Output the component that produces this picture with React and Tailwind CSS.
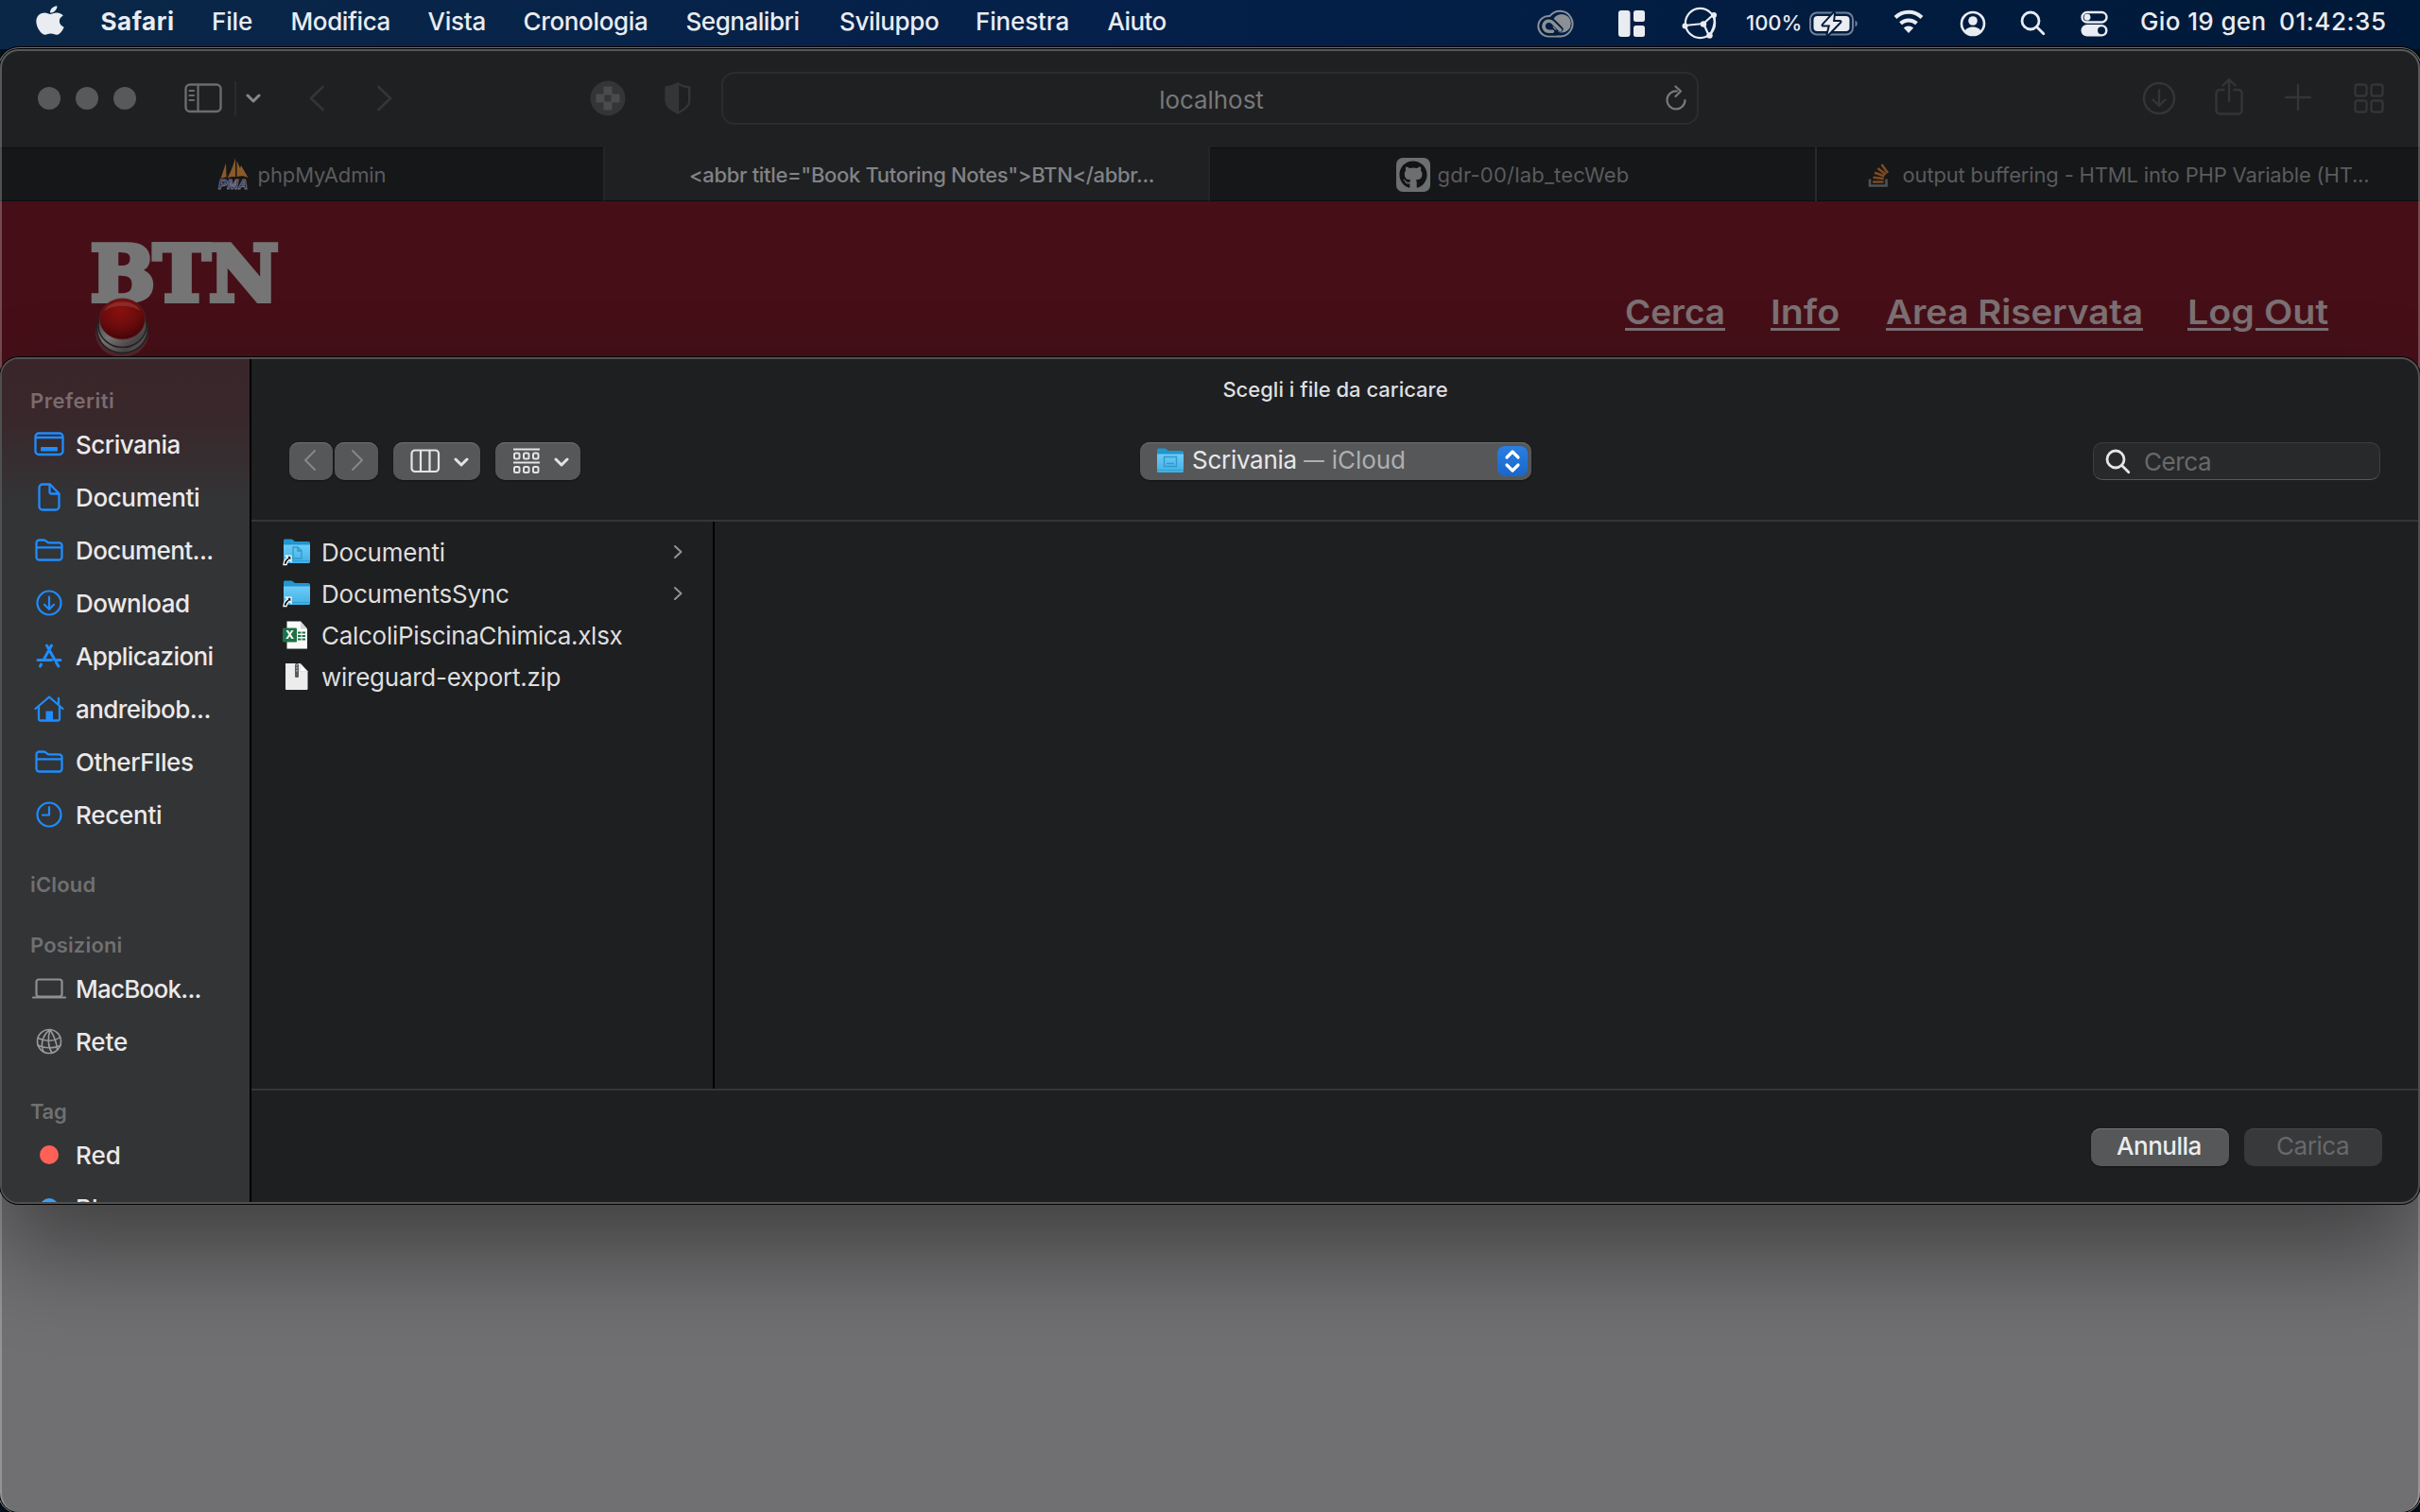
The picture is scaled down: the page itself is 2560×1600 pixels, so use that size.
import React from "react";
import { FaApple, FaGithub } from "react-icons/fa";

/* ---------- generic drawing helpers ---------- */

function Icon({ w, h, vb, className = "", children, sw = 2 }) {
  return (
    <svg
      width={w}
      height={h}
      viewBox={vb || `0 0 ${w} ${h}`}
      fill="none"
      stroke="currentColor"
      strokeWidth={sw}
      strokeLinecap="round"
      strokeLinejoin="round"
      className={"block shrink-0 " + className}
    >
      {children}
    </svg>
  );
}

const Chevron = ({ className }) => (
  <Icon w={16} h={10} sw={3} className={className}>
    <path d="M2 2l6 6 6-6" />
  </Icon>
);

/* ---------- menu bar ---------- */

const MENUS = [
  ["File", "w-[83.5px] tracking-[-0.14px]"],
  ["Modifica", "w-[145px] tracking-[-0.4px]"],
  ["Vista", "w-[101px] tracking-[-0.24px]"],
  ["Cronologia", "w-[172px] tracking-[-0.34px]"],
  ["Segnalibri", "w-[162.5px] tracking-[-0.46px]"],
  ["Sviluppo", "w-[144px] tracking-[-0.38px]"],
  ["Finestra", "w-[139.5px] tracking-[-0.15px]"],
  ["Aiuto", "w-[70px] tracking-[-0.58px]"],
];

function MenuBar() {
  return (
    <div className="flex h-[52px] shrink-0 items-start bg-linear-to-r from-[#0a2747] via-[#05204a] via-45% to-[#001938] text-[26px] font-medium leading-[45px] text-[#e9ecf1]">
      <div className="ml-[38px] flex h-[43px] w-[68.5px] items-center">
        <FaApple className="block h-[35px] w-[30px]" preserveAspectRatio="none" />
      </div>
      <div className="w-[117.5px] font-bold tracking-[0.55px]">Safari</div>
      {MENUS.map(([t, c]) => (
        <div key={t} className={c}>
          {t}
        </div>
      ))}
      <div className="ml-auto flex h-[49px] items-center">
        <Icon w={40} h={30} className="text-[#8b9097]" sw={2}>
          <path d="M12.500 28.500A10.800 10.800 0 1 1 13.500 7A13.400 13.400 0 1 1 25.500 28.500Z" />
          <circle cx="26" cy="14.800" r="9.800" fill="currentColor" stroke="none" />
          <path d="M19.500 24.500h-7a6.500 6.500 0 1 1 4.600-11.100l7.400 7.400" stroke="#021c3b" strokeWidth="6" />
          <path d="M16.500 23.200h-4a5.500 5.500 0 1 1 3.900-9.400l8.100 8" strokeWidth="3.600" />
        </Icon>
        <Icon w={28} h={28} className="ml-[46px]">
          <g fill="currentColor" stroke="none">
            <rect width="12.500" height="28" rx="3" />
            <rect x="16" width="12" height="12" rx="2.500" />
            <rect x="16" y="16" width="12" height="12" rx="2.500" />
          </g>
        </Icon>
        <Icon w={38} h={36} className="ml-[39px]" sw={2.2}>
          <circle cx="19.500" cy="17.500" r="15.600" />
          <path d="M3 20l20-2 11-10M23 18l6 13M34 8c2 8 0 16-5 23" />
          <g fill="currentColor" stroke="none">
            <circle cx="3.500" cy="20.500" r="3" />
            <circle cx="23" cy="18.500" r="3.200" />
            <circle cx="34" cy="9" r="3" />
            <circle cx="29.500" cy="30.500" r="3.200" />
          </g>
        </Icon>
        <div className="ml-[30px] w-[67px] text-[22px]">100%</div>
        <Icon w={52} h={28} sw={2}>
          <rect x="1" y="2.500" width="45" height="23" rx="7" stroke="#6f8097" />
          <path d="M48.500 10.500v7c3-1.500 3-5.500 0-7z" fill="#6f8097" stroke="none" />
          <rect x="4.500" y="6" width="38" height="16" rx="4" fill="currentColor" stroke="none" />
          <path d="M26 3L14.500 15.500h7.500L19.500 25.500 32.500 12h-7.500z" fill="currentColor" stroke="#021c3b" strokeWidth="4" />
          <path d="M26 3L14.500 15.500h7.500L19.500 25.500 32.500 12h-7.500z" fill="currentColor" stroke="none" />
        </Icon>
        <Icon w={34} h={26} className="ml-[36px] mb-[3px]" sw={4}>
          <path d="M3 8.500a20 20 0 0 1 28 0" strokeLinecap="butt" />
          <path d="M8.500 14.800a12.500 12.500 0 0 1 17 0" strokeLinecap="butt" />
          <path d="M17 25l-5.200-5.500a7.600 7.600 0 0 1 10.400 0z" fill="currentColor" stroke="none" />
        </Icon>
        <Icon w={28} h={28} className="ml-[37px]" sw={2.6}>
          <circle cx="14" cy="14" r="12" />
          <circle cx="14" cy="11" r="4.800" fill="currentColor" stroke="none" />
          <path d="M5.500 22c2-6 15-6 17 0-4 5-13 5-17 0z" fill="currentColor" stroke="none" />
        </Icon>
        <Icon w={27} h={27} className="ml-[36px]" sw={2.8}>
          <circle cx="11" cy="11" r="9" />
          <path d="M17.800 17.800l7 7" />
        </Icon>
        <Icon w={30} h={28} className="ml-[37px]" sw={2.4}>
          <rect x="1.500" y="2" width="26" height="10.500" rx="5.250" />
          <circle cx="7" cy="7.250" r="3.400" fill="currentColor" stroke="none" />
          <rect x="0.500" y="15" width="28" height="12.500" rx="6.250" fill="currentColor" stroke="none" />
          <circle cx="22" cy="21.250" r="4" fill="#021c3b" stroke="none" />
        </Icon>
      </div>
      <div className="ml-[33px] w-[147px] whitespace-pre tracking-[0.38px]">Gio 19 gen</div>
      <div className="w-[149px] tracking-[0.61px]">01:42:35</div>
    </div>
  );
}

/* ---------- browser window ---------- */

function BrowserToolbar() {
  return (
    <div className="flex h-[104px] shrink-0 items-center bg-[#1f2022] text-[#343537]">
      <div className="ml-[40px] flex gap-[16px]">
        <div className="size-[24px] rounded-full bg-[#58595b]" />
        <div className="size-[24px] rounded-full bg-[#58595b]" />
        <div className="size-[24px] rounded-full bg-[#58595b]" />
      </div>
      <Icon w={40} h={32} className="ml-[51px] text-[#6b6c6e]" sw={2.4}>
        <rect x="1.500" y="1.500" width="37" height="28.500" rx="4.500" />
        <path d="M14.500 2v28M5.500 8h4.500M5.500 13h4.500M5.500 18h4.500" strokeWidth="2.200" />
      </Icon>
      <div className="ml-[13px] h-[36px] w-[2px] bg-[#2a2b2d]" />
      <Chevron className="ml-[10px] text-[#87888a]" />
      <Icon w={18} h={28} className="ml-[50px]" sw={2.6}>
        <path d="M15.500 2L3 14l12.500 12" />
      </Icon>
      <Icon w={18} h={28} className="ml-[54px]" sw={2.6}>
        <path d="M2.500 2L15 14 2.500 26" />
      </Icon>
      <Icon w={38} h={38} className="ml-[208px]">
        <circle cx="19" cy="19" r="18.500" fill="#343536" stroke="none" />
        <path d="M14.500 6.500h9v8h8v9h-8v8h-9v-8h-8v-9h8z" fill="#4a4b4d" stroke="none" />
        <rect x="15.500" y="15.500" width="7" height="7" fill="#343536" stroke="none" />
      </Icon>
      <Icon w={28} h={34} className="ml-[41px]" sw={2.4}>
        <path d="M14 1.500C10 4 6 5 1.800 5.500V20c0 6 7 10 12.200 12.500C19.200 30 26.200 26 26.200 20V5.500C22 5 18 4 14 1.500z" />
        <path d="M14 1.500C10 4 6 5 1.800 5.500V20c0 6 7 10 12.200 12.500z" fill="currentColor" />
      </Icon>
      <div className="ml-[32px] flex h-[56px] w-[1034px] items-center rounded-[14px] border-2 border-[#2b2c2e] text-[26px] leading-none text-[#77787a]">
        <div className="flex-1 pl-[37px] pt-[3px] text-center tracking-[-0.07px]">localhost</div>
        <Icon w={24} h={28} className="mr-[10px] text-[#77787a]" sw={2.2}>
          <path d="M13 6.500a9.500 9.500 0 1 0 8.500 9.500" />
          <path d="M11.500 1.500l5.500 5-5.500 5.500" />
        </Icon>
      </div>
      <Icon w={36} h={36} className="ml-[469px]" sw={2.4}>
        <circle cx="18" cy="18" r="16" />
        <path d="M18 9.500v16M11.500 19.500l6.500 6.500 6.500-6.500" />
      </Icon>
      <Icon w={30} h={40} className="mb-[5px] ml-[41px]" sw={2.4}>
        <path d="M9.500 13H5a3.500 3.500 0 0 0-3.500 3.500V35A3.500 3.500 0 0 0 5 38.500h20a3.500 3.500 0 0 0 3.500-3.500V16.500A3.500 3.500 0 0 0 25 13h-4.500M15 25V2M8.500 8.500L15 2l6.500 6.500" />
      </Icon>
      <Icon w={28} h={28} className="mb-[3px] ml-[44px]" sw={2.4}>
        <path d="M14 1v26M1 14h26" />
      </Icon>
      <Icon w={32} h={32} className="ml-[45px]" sw={2.4}>
        <rect x="1.500" y="1.500" width="12" height="12" rx="2.500" />
        <rect x="18.500" y="1.500" width="12" height="12" rx="2.500" />
        <rect x="1.500" y="18.500" width="12" height="12" rx="2.500" />
        <rect x="18.500" y="18.500" width="12" height="12" rx="2.500" />
      </Icon>
    </div>
  );
}

function TabBar() {
  const tab = "flex items-center justify-center whitespace-pre ";
  return (
    <div className="flex h-[57px] shrink-0 text-[22px] text-[#5a5b5d]">
      <div className={tab + "w-[638px] border-y border-[#0c0d0e] bg-[#161719]"}>
        <Icon w={34} h={36} className="mr-[9px]">
          <g fill="#8a5a28" stroke="none">
            <path d="M9 5.500L3.500 22c2.500-1 4-1.500 6-1.500z" />
            <path d="M19 0c-2 8-5 15-8.500 21.500 3-1.500 5.500-1.800 8.500-1.500z" />
            <path d="M20.500 3l3.500 8 1-3 7.500 13c-4-2-8-2-12-1z" />
          </g>
          <text x="1" y="33" textLength="31" lengthAdjust="spacingAndGlyphs" fill="#17182c" stroke="#74748c" strokeWidth="1" fontFamily="Liberation Sans" fontStyle="italic" fontWeight="700" fontSize="14">
            PMA
          </text>
        </Icon>
        <span className="pt-px tracking-[-0.12px]">phpMyAdmin</span>
      </div>
      <div className={tab + "w-[642px] border-x-2 border-b border-x-[#242527] border-b-[#0c0d0e] bg-[#1f2022] pl-[32px] pt-[2px] font-medium tracking-[-0.33px] text-[#828385]"}>
        {'<abbr title="Book Tutoring Notes">BTN</abbr...'}
      </div>
      <div className={tab + "w-[640px] border-y border-[#0c0d0e] bg-[#161719]"}>
        <div className="mr-[8px] flex size-[36px] items-center justify-center rounded-[7px] bg-[#6d6e70]">
          <FaGithub className="size-[30px] text-[#121315]" />
        </div>
        <span className="pt-px tracking-[0.2px]">gdr-00/lab_tecWeb</span>
      </div>
      <div className="w-[2px] bg-[#28292b]" />
      <div className={tab + "w-[638px] border-y border-[#0c0d0e] bg-[#161719]"}>
        <Icon w={24} h={26} className="mr-[13px]" sw={2.6}>
          <path d="M2 17.500v7h17.500v-7" stroke="#505355" strokeLinecap="butt" strokeLinejoin="miter" />
          <path d="M5 20.500h11.500M5.500 15.800l11.300 1.200M7 10.800l10.500 3.500M10.300 6l8.700 6.500M14.500 2l6.500 9" stroke="#7d4a20" strokeLinecap="butt" />
        </Icon>
        <span className="pt-px tracking-[-0.17px]">output buffering - HTML into PHP Variable (HT...</span>
      </div>
    </div>
  );
}

function SiteLogo() {
  return (
    <div className="relative ml-[96px] mt-[39px] h-[76px] w-[220px]">
      <div className="font-['DejaVu_Serif'] text-[80px] font-bold leading-[76px] tracking-[-1px] text-[#757575] [-webkit-text-stroke:6px_#757575]">
        BTN
      </div>
      <svg width="60" height="66" viewBox="0 0 60 66" className="absolute left-[4px] top-[63px]">
        <defs>
          <radialGradient id="cap" cx=".45" cy=".3" r=".7">
            <stop offset="0" stopColor="#8a1210" />
            <stop offset=".6" stopColor="#6c0c0e" />
            <stop offset="1" stopColor="#450608" />
          </radialGradient>
          <linearGradient id="ring" x1="0" y1="0" x2="1" y2="1">
            <stop offset="0" stopColor="#2a2526" />
            <stop offset=".45" stopColor="#7b7778" />
            <stop offset=".75" stopColor="#4b4748" />
            <stop offset="1" stopColor="#6c6869" />
          </linearGradient>
        </defs>
        <ellipse cx="29" cy="38" rx="28" ry="25" fill="#5c3c3f" opacity=".55" />
        <ellipse cx="29.500" cy="33" rx="27" ry="25.500" fill="url(#ring)" stroke="#222" strokeWidth="1.500" />
        <ellipse cx="29.500" cy="29" rx="25.500" ry="23.500" fill="none" stroke="#252223" strokeWidth="1.500" />
        <ellipse cx="29.500" cy="22.500" rx="24" ry="21.500" fill="url(#cap)" stroke="#5a2023" strokeWidth="1" />
        <path d="M10 14C17 1 42 1 49 14 38 7 20 7 10 14z" fill="#a05048" opacity=".45" />
      </svg>
    </div>
  );
}

function BrowserWindow() {
  const link = "inline-block origin-left underline decoration-[3px] underline-offset-[4px] ";
  return (
    <div className="relative flex h-[1548px] w-full flex-col overflow-hidden rounded-[20px] bg-[#707072]">
      <BrowserToolbar />
      <TabBar />
      <div className="flex h-[240px] shrink-0 justify-between bg-[#460f18]">
        <SiteLogo />
        <nav className="mt-[95px] flex text-[36px] font-semibold leading-[44px] text-[#7b7073]">
          <div className="w-[154px]"><a className={link + "scale-x-[1.026]"}>Cerca</a></div>
          <div className="w-[122px]"><a className={link + "scale-x-[1.09]"}>Info</a></div>
          <div className="w-[319px]"><a className={link + "scale-x-[1.067]"}>Area Riservata</a></div>
          <div className="w-[246px]"><a className={link + "scale-x-[1.095]"}>Log Out</a></div>
        </nav>
      </div>
      <div className="pointer-events-none absolute inset-0 rounded-[20px] border-2 border-b-0 border-white/25" />
    </div>
  );
}

/* ---------- file chooser sheet ---------- */

const FolderLine = () => (
  <Icon w={30} h={24} sw={2.3}>
    <path d="M1.500 19.500v-15A3 3 0 0 1 4.500 1.500h4.800c1.200 0 1.800.4 2.600 1.200l1 .8c.8.6 1.200.8 2.400.8h10.200a3 3 0 0 1 3 3v12.200a3 3 0 0 1-3 3h-21a3 3 0 0 1-3-3zM1.500 9.300h27" />
  </Icon>
);

const SIDE_ICONS = {
  desktop: (
    <Icon w={32} h={26} sw={2.3}>
      <rect x="1.500" y="1.500" width="29" height="22.500" rx="3.500" />
      <path d="M2 6h28" />
      <rect x="7" y="16" width="18" height="4.500" rx="1" fill="currentColor" stroke="none" />
    </Icon>
  ),
  doc: (
    <Icon w={24} h={30} sw={2.3}>
      <path d="M13 1.500H5A3.500 3.500 0 0 0 1.500 5v20A3.500 3.500 0 0 0 5 28.500h14a3.500 3.500 0 0 0 3.500-3.500V11.500zM12.500 2v7.500a2 2 0 0 0 2 2h7.500" />
    </Icon>
  ),
  folder: <FolderLine />,
  download: (
    <Icon w={28} h={28} sw={2.2}>
      <circle cx="14" cy="14" r="12.500" />
      <path d="M14 7.500v13M9 15.800l5 5 5-5" />
    </Icon>
  ),
  apps: (
    <Icon w={28} h={26} sw={3}>
      <path d="M11.500 2L20 17.500M16.500 2L8 17.500M2 17.500h14.500M21.500 17.500H26M5.500 22l-1 2M21.500 20l2.300 4" />
    </Icon>
  ),
  home: (
    <Icon w={32} h={28} sw={2.3}>
      <path d="M1.500 14L16 1.500 30.500 14M5 12v12.500a2 2 0 0 0 2 2h18a2 2 0 0 0 2-2V12M26 3v6" />
      <rect x="12.500" y="16.500" width="7.500" height="10" fill="currentColor" stroke="none" />
    </Icon>
  ),
  clock: (
    <Icon w={28} h={28} sw={2.2}>
      <circle cx="14" cy="14" r="12.500" />
      <path d="M14 6v8.500H7" />
    </Icon>
  ),
  laptop: (
    <Icon w={36} h={22} sw={2.2} className="text-[#8f9092]">
      <rect x="4.500" y="1.500" width="27" height="18" rx="2.500" />
      <path d="M1 20.500h34" />
    </Icon>
  ),
  globe: (
    <Icon w={28} h={28} sw={1.6} className="text-[#98999b]">
      <circle cx="14" cy="14" r="12.500" />
      <path d="M15 1.500C6 8 5 18 8 24.800M15 1.500c-3 9-2 19 2 24.500M15 1.500c3 5 7 12 7.500 21M2 10.500c8 4 18 3.500 23.500-1M2 18c6 3.500 18 3.500 24 .500" />
    </Icon>
  ),
  red: <div className="size-[20px] rounded-full bg-[#ff6159]" />,
  blue: <div className="size-[20px] rounded-full bg-[#3a9ff8]" />,
};

const GROUPS = [
  {
    title: "Preferiti",
    head: "mt-[28px] mb-[2px] tracking-[0.51px] text-[#7a6b6e]",
    items: [
      ["desktop", "Scrivania", "tracking-[-0.5px]"],
      ["doc", "Documenti", "tracking-[-0.37px]"],
      ["folder", "Document...", "tracking-[-0.55px]"],
      ["download", "Download", "tracking-[-0.5px]"],
      ["apps", "Applicazioni", "tracking-[-0.6px]"],
      ["home", "andreibob...", "tracking-[-0.55px]"],
      ["folder", "OtherFIles", "tracking-[-0.38px]"],
      ["clock", "Recenti", "tracking-[-0.26px]"],
    ],
  },
  { title: "iCloud", head: "mt-[30px] tracking-[0.18px] text-[#6f7072]", items: [] },
  {
    title: "Posizioni",
    head: "mt-[32px] mb-[2px] tracking-[0.15px] text-[#6f7072]",
    items: [
      ["laptop", "MacBook...", "tracking-[-0.75px]"],
      ["globe", "Rete", "tracking-[-0.12px]"],
    ],
  },
  {
    title: "Tag",
    head: "mt-[30px] mb-[2px] tracking-[-0.3px] text-[#6f7072]",
    items: [
      ["red", "Red", ""],
      ["blue", "Blue", ""],
    ],
  },
];

function Sidebar() {
  return (
    <aside className="flex h-full w-[264px] shrink-0 flex-col overflow-hidden border-r-2 border-black bg-[#333436] bg-linear-to-b from-[#3a262a] from-0% via-[#38272b] via-7% to-[#333436] to-17%">
      {GROUPS.map((g) => (
        <React.Fragment key={g.title}>
          <div className={"ml-[30px] h-[32px] shrink-0 text-[22px] font-semibold leading-[32px] " + g.head}>{g.title}</div>
          {g.items.map(([icon, label, c]) => (
            <div key={label} className="flex h-[56px] shrink-0 items-center text-[#1f8cff]">
              <div className="ml-[30px] flex w-[40px] justify-center">{SIDE_ICONS[icon]}</div>
              <div className={"ml-[8px] text-[26px] font-medium text-[#ebe9ea] " + c}>{label}</div>
            </div>
          ))}
        </React.Fragment>
      ))}
    </aside>
  );
}

function BlueFolder({ alias, glyph }) {
  return (
    <svg width="30" height="30" viewBox="0 0 30 30" className="block shrink-0">
      <defs>
        <linearGradient id="folderFront" x1="0" y1="0" x2="0" y2="1">
          <stop offset="0" stopColor="#6fcbf6" />
          <stop offset="1" stopColor="#3fb0e6" />
        </linearGradient>
      </defs>
      <path d="M1 3.500C1 2 1.500 1.500 3 1.500h6.500c1.500 0 2 2.500 4 2.500H27c1.300 0 2 .7 2 2V12H1z" fill="#2196cf" />
      <path d="M1 7.500h28V25c0 1.500-.5 2-2 2H3c-1.500 0-2-.5-2-2z" fill="url(#folderFront)" />
      <path d="M1 24.500h28" stroke="#2f9fd6" strokeWidth="1" />
      {glyph === "doc" && <path d="M11 10h5l4 4v8h-9zM16 10v4h4" fill="none" stroke="#3199cb" strokeWidth="1.300" />}
      {glyph === "desktop" && (
        <path d="M8.500 10.500h13v10h-13zM11 17.500h8" fill="none" stroke="#3199cb" strokeWidth="1.400" />
      )}
      {alias && (
        <path d="M1 28.500c0-4 2-6 4.500-7.500l-2-1.800h5.500v6l-2-2c-2 1.300-2.500 3-3 5.300z" fill="#111" stroke="#fff" strokeWidth="1.300" />
      )}
    </svg>
  );
}

const ExcelFile = () => (
  <svg width="30" height="30" viewBox="0 0 30 30" className="block shrink-0">
    <path d="M4.500.5H19l7 8v21H4.500z" fill="#fbfbfb" />
    <path d="M19 .5v8h7z" fill="#d4d4d4" />
    <g fill="#1e7145">
      <rect x="16" y="11.500" width="3.500" height="2" />
      <rect x="20.500" y="11.500" width="3.500" height="2" />
      <rect x="16" y="15" width="3.500" height="2" />
      <rect x="20.500" y="15" width="3.500" height="2" />
      <rect x="16" y="18.500" width="3.500" height="2" />
      <rect x="20.500" y="18.500" width="3.500" height="2" />
      <rect x="0" y="7.500" width="15" height="15" rx="1" />
    </g>
    <text x="7.500" y="19.300" textAnchor="middle" fill="#fff" fontFamily="Inter" fontWeight="700" fontSize="12">
      X
    </text>
  </svg>
);

const ZipFile = () => (
  <svg width="30" height="30" viewBox="0 0 30 30" className="block shrink-0">
    <path d="M3 1H18.500l8 8.500V28a1 1 0 0 1-1 1H4a1 1 0 0 1-1-1z" fill="#ececec" />
    <path d="M18.500 1v8.500h8z" fill="#fff" stroke="#cfcfcf" strokeWidth=".6" />
    <rect x="13" y="1" width="4" height="15" rx="1.500" fill="#5a5b5d" />
    <path d="M15 2v8" stroke="#c9c9c9" strokeWidth="1.200" strokeDasharray="1.500 1.500" />
  </svg>
);

const FILES = [
  [<BlueFolder alias glyph="doc" />, "Documenti", "tracking-[-0.2px]", true],
  [<BlueFolder alias />, "DocumentsSync", "tracking-[-0.21px]", true],
  [<ExcelFile />, "CalcoliPiscinaChimica.xlsx", "tracking-[-0.29px]", false],
  [<ZipFile />, "wireguard-export.zip", "tracking-[-0.25px]", false],
];

function SheetToolbar() {
  const button = "flex h-[40px] items-center rounded-[10px] bg-[#565759] shadow-[inset_0_1px_0_#6f7072,0_1px_2px_#00000066] ";
  return (
    <div className="h-[172px] shrink-0 border-b-2 border-[#343537]">
      <div className="flex h-[64px] items-center justify-center pl-px text-[22px] font-medium text-[#dfdfe0]">
        Scegli i file da caricare
      </div>
      <div className="mt-[24px] grid grid-cols-[900px_414px_1fr] pl-[40px] pr-[40px]">
        <div className="flex text-[#e4e4e5]">
          <div className={button + "w-[46px] justify-center pb-[2px] pr-[2px]"}>
            <Icon w={14} h={24} sw={2} className="text-[#87888a]">
              <path d="M12 2L2 12l10 10" />
            </Icon>
          </div>
          <div className={button + "ml-[2px] w-[46px] justify-center pb-[2px] pl-px"}>
            <Icon w={14} h={24} sw={2} className="text-[#87888a]">
              <path d="M2 2l10 10L2 22" />
            </Icon>
          </div>
          <div className={button + "ml-[16px] w-[92px] pl-[18px]"}>
            <Icon w={32} h={26} sw={2.2}>
              <rect x="1.500" y="1.500" width="28.500" height="22.500" rx="3.500" />
              <path d="M11 2v22M20.500 2v22" />
            </Icon>
            <Chevron className="ml-[14px] mt-[2px]" />
          </div>
          <div className={button + "ml-[16px] w-[90px] pl-[18px]"}>
            <Icon w={30} h={28} sw={2}>
              <path d="M1 1.500h28M1 15.500h28" strokeLinecap="butt" />
              <rect x="2" y="5.500" width="5.500" height="6" rx="1.500" />
              <rect x="12" y="5.500" width="5.500" height="6" rx="1.500" />
              <rect x="22" y="5.500" width="5.500" height="6" rx="1.500" />
              <rect x="2" y="20" width="5.500" height="6" rx="1.500" />
              <rect x="12" y="20" width="5.500" height="6" rx="1.500" />
              <rect x="22" y="20" width="5.500" height="6" rx="1.500" />
            </Icon>
            <Chevron className="ml-[14px] mt-[2px]" />
          </div>
        </div>
        <div className={button + "pl-[17px] pr-[4px] text-[26px]"}>
          <BlueFolder glyph="desktop" />
          <div className="ml-[8px] whitespace-pre pb-[3px] text-[#aeafb0]">
            <span className="tracking-[-0.28px] text-[#e8e8e9]">Scrivania</span>
            <span className="inline-block w-[37px] text-center"><span className="inline-block scale-x-[0.84]">—</span></span>
            <span className="tracking-[-0.1px]">iCloud</span>
          </div>
          <div className="ml-auto flex h-[32px] w-[32px] flex-col items-center justify-center rounded-[8px] bg-linear-to-b from-[#2a7fe2] to-[#1a66cc] text-white">
            <Icon w={18} h={26} sw={3.2}>
              <path d="M3 9l6-6 6 6M3 17l6 6 6-6" />
            </Icon>
          </div>
        </div>
        <div className="flex h-[40px] w-[304px] items-center justify-self-end rounded-[10px] border border-[#3d3e40] border-b-[#57585a] bg-[#28292b] pl-[12px] text-[26px] text-[#68696b]">
          <Icon w={27} h={27} sw={2.8} className="text-[#e6e6e7]">
            <circle cx="11" cy="11" r="9" />
            <path d="M17.800 17.800l7 7" />
          </Icon>
          <div className="ml-[14px] tracking-[-0.4px]">Cerca</div>
        </div>
      </div>
    </div>
  );
}

function FileSheet() {
  return (
    <div className="absolute left-0 top-[378px] flex h-[896px] w-[2560px] overflow-hidden rounded-[20px] border-2 border-[#4f5052] bg-[#1e1f21] shadow-[0_0_0_1px_#050505,0_50px_100px_rgba(0,0,0,0.42)]">
      <Sidebar />
      <div className="flex flex-1 flex-col">
        <SheetToolbar />
        <div className="flex flex-1">
          <div className="w-[490px] border-r-2 border-black pt-[10px]">
            {FILES.map(([icon, name, c, open]) => (
              <div key={name} className="flex h-[44px] items-center pl-[33px] text-[26px] text-[#dedede]">
                {icon}
                <div className={"ml-[11px] flex-1 " + c}>{name}</div>
                {open && (
                  <Icon w={10} h={16} sw={2} className="mr-[32px] text-[#929395]">
                    <path d="M2 2l6.500 6L2 14" />
                  </Icon>
                )}
              </div>
            ))}
          </div>
        </div>
        <div className="flex h-[120px] shrink-0 justify-end gap-[16px] border-t-2 border-[#343537] pr-[38px] pt-[40px] text-[26px]">
          <div className="flex h-[40px] w-[146px] items-center justify-center rounded-[10px] bg-[#565759] pb-[3px] pr-[2px] font-medium tracking-[-0.49px] text-[#ececec] shadow-[inset_0_1px_0_#747577,0_1px_2px_#00000066]">
            Annulla
          </div>
          <div className="flex h-[40px] w-[146px] items-center justify-center rounded-[10px] bg-[#38393b] pb-[3px] pr-px tracking-[-0.44px] text-[#68696b] shadow-[inset_0_1px_0_#454648]">
            Carica
          </div>
        </div>
      </div>
    </div>
  );
}

export default function App() {
  return (
    <div className="relative flex h-[1600px] w-[2560px] flex-col overflow-hidden bg-[#020f1c] font-['Inter',sans-serif]">
      <MenuBar />
      <div className="rounded-[20px] shadow-[0_0_0_1px_#000,0_0_0_2px_#6f7275,0_0_0_3px_#000]">
        <BrowserWindow />
      </div>
      <FileSheet />
    </div>
  );
}
